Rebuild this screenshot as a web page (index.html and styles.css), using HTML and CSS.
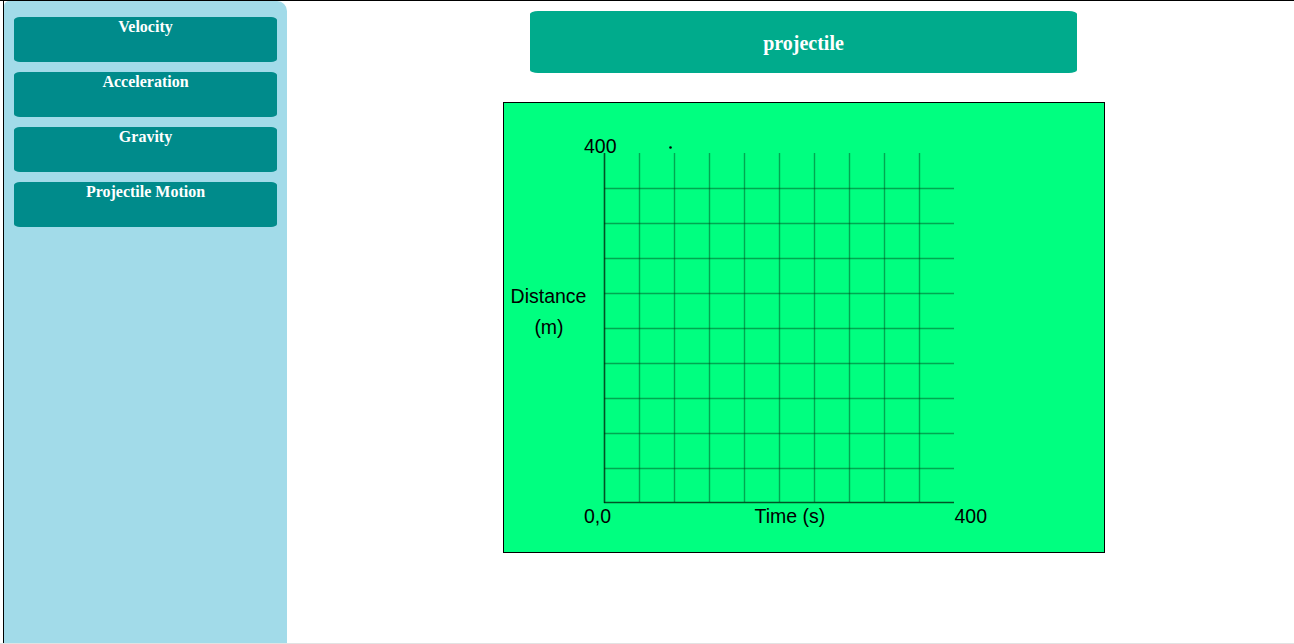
FILE: index.html
```html
<!DOCTYPE html>
<html>
<head>
<meta charset="utf-8">
<link rel="stylesheet" href="styles.css">
</head>
<body>
<div class="frame">
  <nav class="sidebar">
    <div class="nav-btn">Velocity</div>
    <div class="nav-btn">Acceleration</div>
    <div class="nav-btn">Gravity</div>
    <div class="nav-btn">Projectile Motion</div>
  </nav>
  <main class="main">
    <div class="title">projectile</div>
    <div class="graph">
      <svg width="600" height="449" viewBox="0 0 600 449" xmlns="http://www.w3.org/2000/svg">
        <g stroke="rgba(0,60,25,0.45)" stroke-width="1.4">
          <line x1="135.5" y1="50" x2="135.5" y2="399"/>
          <line x1="170.5" y1="50" x2="170.5" y2="399"/>
          <line x1="205.5" y1="50" x2="205.5" y2="399"/>
          <line x1="240.5" y1="50" x2="240.5" y2="399"/>
          <line x1="275.5" y1="50" x2="275.5" y2="399"/>
          <line x1="310.5" y1="50" x2="310.5" y2="399"/>
          <line x1="345.5" y1="50" x2="345.5" y2="399"/>
          <line x1="380.5" y1="50" x2="380.5" y2="399"/>
          <line x1="415.5" y1="50" x2="415.5" y2="399"/>
          <line x1="100" y1="85.5" x2="450" y2="85.5"/>
          <line x1="100" y1="120.5" x2="450" y2="120.5"/>
          <line x1="100" y1="155.5" x2="450" y2="155.5"/>
          <line x1="100" y1="190.5" x2="450" y2="190.5"/>
          <line x1="100" y1="225.5" x2="450" y2="225.5"/>
          <line x1="100" y1="260.5" x2="450" y2="260.5"/>
          <line x1="100" y1="295.5" x2="450" y2="295.5"/>
          <line x1="100" y1="330.5" x2="450" y2="330.5"/>
          <line x1="100" y1="365.5" x2="450" y2="365.5"/>
        </g>
        <g stroke="rgba(0,40,15,0.8)" stroke-width="1.6">
          <line x1="100.5" y1="50" x2="100.5" y2="400"/>
          <line x1="100" y1="399.5" x2="450" y2="399.5"/>
        </g>
        <circle cx="166.5" cy="44.5" r="1.3" fill="#000"/>
        <g class="axis-text">
          <text x="80" y="50">400</text>
          <text x="44.5" y="200" text-anchor="middle">Distance</text>
          <text x="45" y="231" text-anchor="middle">(m)</text>
          <text x="80" y="420">0,0</text>
          <text x="250.5" y="420">Time (s)</text>
          <text x="450.5" y="420">400</text>
        </g>
      </svg>
    </div>
  </main>
</div>
</body>
</html>
```

FILE: styles.css
```css
html, body {
  margin: 0;
  padding: 0;
  background: #ffffff;
}

body {
  border-top: 1px solid #000000;
  border-bottom: 1px solid #e2e2e2;
  overflow: hidden;
}

.frame {
  margin-left: 3px;
  border-left: 1px solid #000000;
  height: 642px;
  display: flex;
}

.sidebar {
  width: 283px;
  flex: none;
  background: #a2dbe9;
  border-radius: 5px 10px 0 0;
  padding: 16px 10px 0 10px;
  box-sizing: border-box;
  display: flex;
  flex-direction: column;
  gap: 10px;
}

.nav-btn {
  height: 45px;
  box-sizing: border-box;
  padding-top: 1px;
  background: #008b8b;
  border-radius: 6px / 3px;
  color: #ffffff;
  font-family: "Liberation Serif", "Times New Roman", serif;
  font-weight: bold;
  font-size: 16px;
  line-height: 17px;
  text-align: center;
}

.main {
  flex: 1;
  display: flex;
  flex-direction: column;
  align-items: flex-start;
}

.title {
  margin-top: 10px;
  margin-left: 243px;
  width: 547px;
  height: 62px;
  box-sizing: border-box;
  padding-top: 2px;
  background: #00ab8c;
  border-radius: 8px / 3px;
  color: #ffffff;
  font-family: "Liberation Serif", "Times New Roman", serif;
  font-weight: bold;
  font-size: 20px;
  display: flex;
  align-items: center;
  justify-content: center;
}

.graph {
  margin-top: 29px;
  margin-left: 216px;
  width: 600px;
  height: 449px;
  border: 1px solid #000000;
  background: #00ff80;
}

.graph svg {
  display: block;
}

.axis-text text {
  font-family: "Liberation Sans", Arial, sans-serif;
  font-size: 19.5px;
  fill: #000000;
}
```
